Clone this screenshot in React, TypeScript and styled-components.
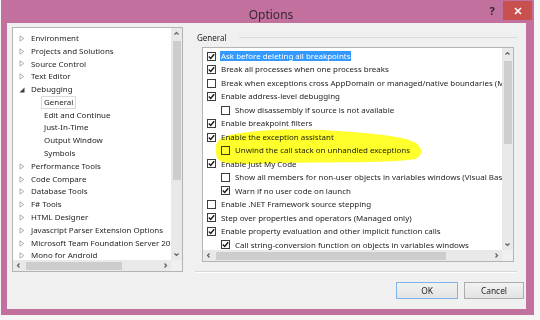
import React from 'react';
import styled, { createGlobalStyle } from 'styled-components';

const Global = createGlobalStyle`
  html, body { margin: 0; padding: 0; background: #f6f6f6; }
  body { font-family: "Noto Sans", "Open Sans", sans-serif; color: #1e1e1e; }
  * { box-sizing: border-box; }
`;

const Window = styled.div`
  width: 533px;
  height: 315px;
  margin-left: 1px;
  background: #c2709e;
  display: flex;
  flex-direction: column;
`;

const TitleBar = styled.div`
  height: 23px;
  display: grid;
  grid-template-columns: 1fr auto 1fr;
  align-items: start;
  padding-left: 7px;
`;

const Title = styled.div`
  grid-column: 2;
  font-size: 12px;
  line-height: 29px;
  color: #3b2733;
`;

const Controls = styled.div`
  grid-column: 3;
  justify-self: end;
  display: flex;
  align-items: flex-start;
  margin-right: 2px;
`;

const HelpBtn = styled.div`
  width: 22px;
  height: 20px;
  font-size: 11px;
  font-weight: 700;
  line-height: 22px;
  text-align: center;
  color: #3a2431;
`;

const CloseBtn = styled.div`
  width: 29px;
  height: 19px;
  margin-top: 1px;
  background: #c8504f;
  display: flex;
  align-items: center;
  justify-content: center;
`;

const Body = styled.div`
  flex: 1;
  margin: 0 8px 6px 6px;
  background: #f0f0f0;
  padding: 4px 2px 10px 5px;
  display: flex;
  flex-direction: column;
`;

const MainRow = styled.div`
  display: flex;
  height: 246px;
`;

const ScrollBox = styled.div<{ $w: number; $h: number }>`
  width: ${(p) => p.$w}px;
  height: ${(p) => p.$h}px;
  border: 1px solid #b4b4b4;
  background: #fff;
  display: grid;
  grid-template-columns: 1fr 11px;
  grid-template-rows: 1fr 11px;
  position: relative;
`;

const Viewport = styled.div<{ $pt: number }>`
  overflow: hidden;
  padding-top: ${(p) => p.$pt}px;
  position: relative;
`;

const VTrack = styled.div`
  background: #e9e9e9;
  display: flex;
  flex-direction: column;
  align-items: center;
`;

const HTrack = styled.div`
  background: #e9e9e9;
  display: flex;
  align-items: center;
`;

const Corner = styled.div`
  background: #f0f0f0;
`;

const ArrowCell = styled.div`
  width: 11px;
  height: 11px;
  display: flex;
  align-items: center;
  justify-content: center;
  flex: none;
`;

const VThumb = styled.div<{ $top: number; $len: number }>`
  width: 8px;
  margin-top: ${(p) => p.$top}px;
  height: ${(p) => p.$len}px;
  background: #cdcdcd;
`;

const HThumb = styled.div<{ $left: number; $len: number }>`
  height: 8px;
  margin-left: ${(p) => p.$left}px;
  width: ${(p) => p.$len}px;
  background: #cdcdcd;
`;

const Spacer = styled.div`
  flex: 1;
`;

const TreeRow = styled.div<{ $level: number }>`
  height: 12.8px;
  display: flex;
  align-items: center;
  padding-left: ${(p) => 5 + p.$level * 13}px;
  white-space: nowrap;
  font-size: 7.95px;
`;

const Expander = styled.span`
  width: 8px;
  height: 8px;
  flex: none;
  display: flex;
  align-items: center;
  justify-content: center;
`;

const TreeLabel = styled.span<{ $selected?: boolean }>`
  margin-left: 5px;
  padding: 0 2px;
  margin-right: -2px;
  line-height: 11px;
  border: 1px solid ${(p) => (p.$selected ? '#dadada' : 'transparent')};
  position: relative;
  left: -3px;
`;

const RightPane = styled.div`
  width: 322px;
  margin-left: 12px;
  display: flex;
  flex-direction: column;
`;

const GroupHeader = styled.div`
  height: 20px;
  display: flex;
  align-items: center;
  padding-left: 2px;
  font-size: 8px;
`;

const HeaderLine = styled.div`
  flex: 1;
  height: 1px;
  margin-left: 12px;
  background: #d5dbe0;
`;

const ListWrap = styled.div`
  margin-left: 7px;
`;

const Separator = styled.div`
  margin-top: auto;
  height: 2px;
  border-top: 1px solid #d7d7d7;
  border-bottom: 1px solid #ffffff;
`;

const OptionRow = styled.div<{ $level: number }>`
  height: 13.48px;
  display: flex;
  align-items: center;
  padding-left: ${(p) => 4 + p.$level * 14}px;
  white-space: nowrap;
  font-size: 7.95px;
  position: relative;
  z-index: 1;
`;

const Box = styled.span`
  width: 9px;
  height: 9px;
  flex: none;
  border: 1px solid #3c3c3c;
  background: #fff;
  display: flex;
  align-items: center;
  justify-content: center;
`;

const OptionLabel = styled.span<{ $selected?: boolean }>`
  margin-left: 4px;
  padding: 0 1px;
  line-height: 10.5px;
  background: ${(p) => (p.$selected ? '#3399ff' : 'transparent')};
  color: ${(p) => (p.$selected ? '#ffffff' : '#1e1e1e')};
`;

const Marker = styled.svg`
  position: absolute;
  left: 0;
  top: 0;
  pointer-events: none;
  mix-blend-mode: multiply;
  z-index: 2;
`;

const ButtonRow = styled.div`
  margin-top: 9px;
  display: flex;
  justify-content: flex-end;
  gap: 6px;
`;

const Button = styled.div<{ $w: number; $default?: boolean }>`
  width: ${(p) => p.$w}px;
  height: 17px;
  border: 1px solid ${(p) => (p.$default ? '#7eb4ea' : '#acacac')};
  background: linear-gradient(#f2f2f2, #e3e3e3);
  font-size: 8.4px;
  display: flex;
  align-items: center;
  justify-content: center;
  color: #1e1e1e;
`;

const Chevron = ({ dir }: { dir: 'up' | 'down' | 'left' | 'right' }) => {
  const d = {
    up: 'M1.5 4.5 L3.5 2.5 L5.5 4.5',
    down: 'M1.5 2.5 L3.5 4.5 L5.5 2.5',
    left: 'M4.5 1.5 L2.5 3.5 L4.5 5.5',
    right: 'M2.5 1.5 L4.5 3.5 L2.5 5.5',
  }[dir];
  return (
    <svg width="7" height="7" viewBox="0 0 7 7">
      <path d={d} fill="none" stroke="#606060" strokeWidth="1.2" />
    </svg>
  );
};

const Check = () => (
  <svg width="7" height="7" viewBox="0 0 7 7">
    <path d="M0.8 3.6 L2.7 5.5 L6.2 1.2" fill="none" stroke="#1a1a1a" strokeWidth="1.4" />
  </svg>
);

const Collapsed = () => (
  <svg width="6" height="7" viewBox="0 0 6 7">
    <path d="M1 0.8 L4.8 3.5 L1 6.2 Z" fill="none" stroke="#a6a6a6" strokeWidth="0.9" />
  </svg>
);

const Expanded = () => (
  <svg width="6" height="6" viewBox="0 0 6 6">
    <path d="M5.5 0.5 L5.5 5.5 L0.5 5.5 Z" fill="#3c3c3c" />
  </svg>
);

type TreeItem = { label: string; level: number; kind: 'c' | 'e' | 'n'; selected?: boolean };

const tree: TreeItem[] = [
  { label: 'Environment', level: 0, kind: 'c' },
  { label: 'Projects and Solutions', level: 0, kind: 'c' },
  { label: 'Source Control', level: 0, kind: 'c' },
  { label: 'Text Editor', level: 0, kind: 'c' },
  { label: 'Debugging', level: 0, kind: 'e' },
  { label: 'General', level: 1, kind: 'n', selected: true },
  { label: 'Edit and Continue', level: 1, kind: 'n' },
  { label: 'Just-In-Time', level: 1, kind: 'n' },
  { label: 'Output Window', level: 1, kind: 'n' },
  { label: 'Symbols', level: 1, kind: 'n' },
  { label: 'Performance Tools', level: 0, kind: 'c' },
  { label: 'Code Compare', level: 0, kind: 'c' },
  { label: 'Database Tools', level: 0, kind: 'c' },
  { label: 'F# Tools', level: 0, kind: 'c' },
  { label: 'HTML Designer', level: 0, kind: 'c' },
  { label: 'Javascript Parser Extension Options', level: 0, kind: 'c' },
  { label: 'Microsoft Team Foundation Server 2012 Power Tools', level: 0, kind: 'c' },
  { label: 'Mono for Android', level: 0, kind: 'c' },
];

type Opt = { label: string; level: number; checked: boolean; selected?: boolean };

const options: Opt[] = [
  { label: 'Ask before deleting all breakpoints', level: 0, checked: true, selected: true },
  { label: 'Break all processes when one process breaks', level: 0, checked: true },
  { label: 'Break when exceptions cross AppDomain or managed/native boundaries (Managed only)', level: 0, checked: false },
  { label: 'Enable address-level debugging', level: 0, checked: true },
  { label: 'Show disassembly if source is not available', level: 1, checked: false },
  { label: 'Enable breakpoint filters', level: 0, checked: true },
  { label: 'Enable the exception assistant', level: 0, checked: true },
  { label: 'Unwind the call stack on unhandled exceptions', level: 1, checked: false },
  { label: 'Enable Just My Code', level: 0, checked: true },
  { label: 'Show all members for non-user objects in variables windows (Visual Basic only)', level: 1, checked: false },
  { label: 'Warn if no user code on launch', level: 1, checked: true },
  { label: 'Enable .NET Framework source stepping', level: 0, checked: false },
  { label: 'Step over properties and operators (Managed only)', level: 0, checked: true },
  { label: 'Enable property evaluation and other implicit function calls', level: 0, checked: true },
  { label: 'Call string-conversion function on objects in variables windows', level: 1, checked: true },
];

export default function App() {
  return (
    <>
      <Global />
      <Window>
        <TitleBar>
          <Title>Options</Title>
          <Controls>
            <HelpBtn>?</HelpBtn>
            <CloseBtn>
              <svg width="8" height="8" viewBox="0 0 8 8">
                <path d="M1 1 L7 7 M7 1 L1 7" stroke="#ffffff" strokeWidth="1.6" />
              </svg>
            </CloseBtn>
          </Controls>
        </TitleBar>
        <Body>
          <MainRow>
            <ScrollBox $w={171} $h={245}>
              <Viewport $pt={4}>
                {tree.map((t) => (
                  <TreeRow key={t.label} $level={t.level}>
                    <Expander>
                      {t.kind === 'c' && <Collapsed />}
                      {t.kind === 'e' && <Expanded />}
                    </Expander>
                    <TreeLabel $selected={t.selected}>{t.label}</TreeLabel>
                  </TreeRow>
                ))}
              </Viewport>
              <VTrack>
                <ArrowCell>
                  <Chevron dir="up" />
                </ArrowCell>
                <VThumb $top={2} $len={139} />
                <Spacer />
                <ArrowCell>
                  <Chevron dir="down" />
                </ArrowCell>
              </VTrack>
              <HTrack>
                <ArrowCell>
                  <Chevron dir="left" />
                </ArrowCell>
                <HThumb $left={2} $len={96} />
                <Spacer />
                <ArrowCell>
                  <Chevron dir="right" />
                </ArrowCell>
              </HTrack>
              <Corner />
            </ScrollBox>
            <RightPane>
              <GroupHeader>
                General
                <HeaderLine />
              </GroupHeader>
              <ListWrap>
                <ScrollBox $w={312} $h={215}>
                  <Viewport $pt={1.5}>
                    {options.map((o) => (
                      <OptionRow key={o.label} $level={o.level}>
                        <Box>{o.checked && <Check />}</Box>
                        <OptionLabel $selected={o.selected}>{o.label}</OptionLabel>
                      </OptionRow>
                    ))}
                    <Marker width="300" height="203" viewBox="0 0 300 203">
                      <path
                        d="M13 101 C12 92 20 88 32 86 C62 81 100 80 150 84 C185 87 205 90 213 95 C220 100 220 108 212 111 C190 115 130 114 80 115 C50 116 25 117 17 113 C13 110 13 106 13 101 Z"
                        fill="#ffff1a"
                        opacity="0.92"
                      />
                    </Marker>
                  </Viewport>
                  <VTrack>
                    <ArrowCell>
                      <Chevron dir="up" />
                    </ArrowCell>
                    <VThumb $top={2} $len={83} />
                    <Spacer />
                    <ArrowCell>
                      <Chevron dir="down" />
                    </ArrowCell>
                  </VTrack>
                  <HTrack>
                    <ArrowCell>
                      <Chevron dir="left" />
                    </ArrowCell>
                    <HThumb $left={2} $len={230} />
                    <Spacer />
                    <ArrowCell>
                      <Chevron dir="right" />
                    </ArrowCell>
                  </HTrack>
                  <Corner />
                </ScrollBox>
              </ListWrap>
              <Separator />
            </RightPane>
          </MainRow>
          <ButtonRow>
            <Button $w={62} $default>
              OK
            </Button>
            <Button $w={60}>Cancel</Button>
          </ButtonRow>
        </Body>
      </Window>
    </>
  );
}
